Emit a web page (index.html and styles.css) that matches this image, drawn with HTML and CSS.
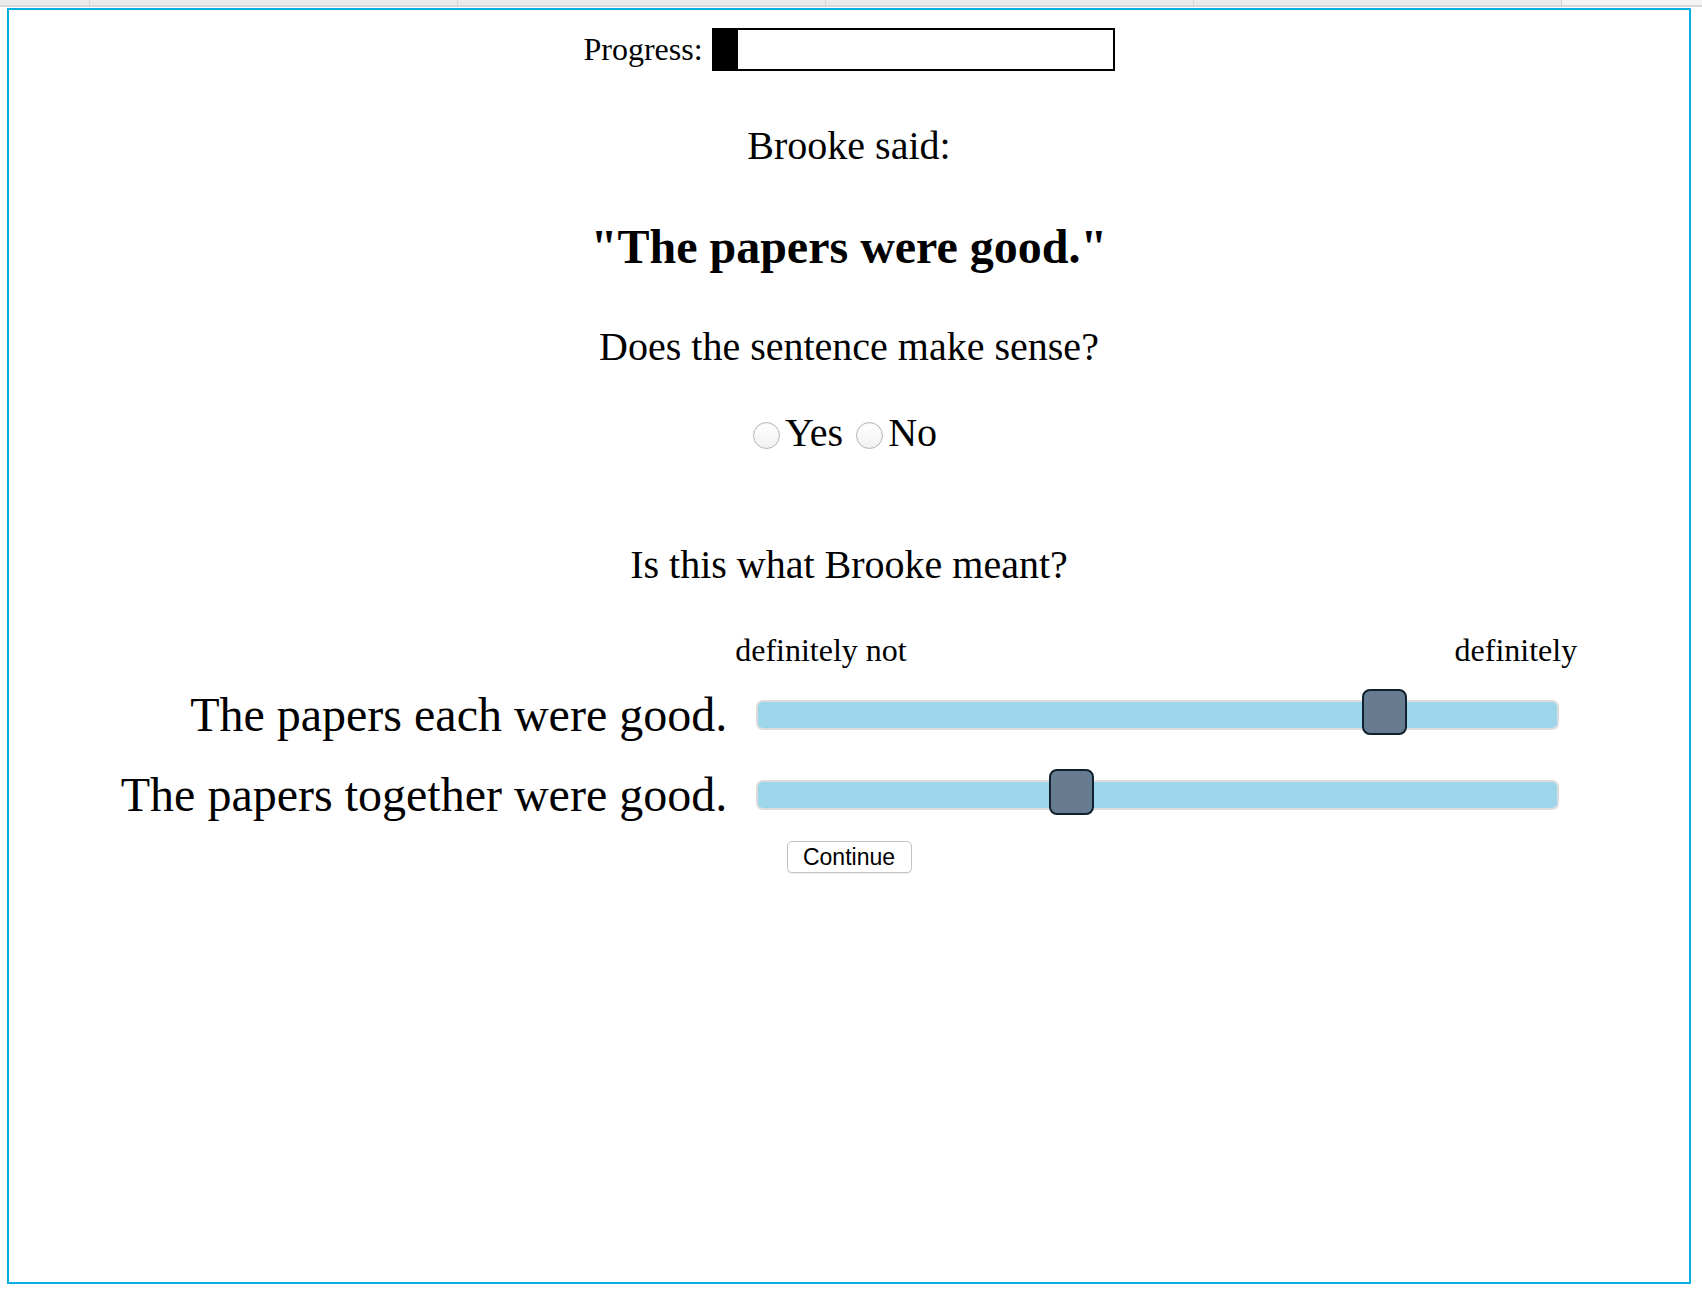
FILE: index.html
```html
<!DOCTYPE html>
<html>
<head>
<meta charset="utf-8">
<title>Experiment</title>
<link rel="stylesheet" href="styles.css">
</head>
<body>
<div class="tabbar">
  <div class="tab tab-first"></div>
  <div class="tab"></div>
  <div class="tab"></div>
  <div class="tab"></div>
  <div class="tab"></div>
  <div class="tab tab-rest"></div>
</div>
<div class="frame">
  <div class="progress-row">
    <span class="progress-label">Progress:</span>
    <div class="progress-box"><div class="progress-fill"></div></div>
  </div>
  <p class="speaker">Brooke said:</p>
  <h2 class="quote">"The papers were good."</h2>
  <p class="question q-sense">Does the sentence make sense?</p>
  <div class="choices">
    <label class="choice"><input type="radio" name="sense" class="radio">Yes</label>
    <label class="choice"><input type="radio" name="sense" class="radio">No</label>
  </div>
  <p class="question q-meant">Is this what Brooke meant?</p>
  <div class="rating">
    <div class="cell-empty"></div>
    <div class="scale-labels"><span>definitely not</span><span>definitely</span></div>
    <div class="sentence">The papers each were good.</div>
    <div class="slider-cell"><div class="slider"><span class="thumb" style="left:78.3%"></span></div></div>
    <div class="sentence">The papers together were good.</div>
    <div class="slider-cell"><div class="slider"><span class="thumb" style="left:39.2%"></span></div></div>
  </div>
  <div class="actions"><button class="continue">Continue</button></div>
</div>
</body>
</html>
```
FILE: styles.css
```css
html, body {
  margin: 0;
  padding: 0;
  background: #ffffff;
}
body {
  font-family: "Liberation Serif", "Times New Roman", serif;
  color: #000;
  width: 1702px;
  height: 1292px;
  overflow: hidden;
}
.tabbar {
  display: flex;
  height: 5px;
  background: #ebebeb;
  border-bottom: 2px solid #d9d9d9;
  margin-bottom: 1px;
}
.tab {
  width: 368px;
  border-left: 1px solid #d2d2d2;
  box-sizing: border-box;
}
.tab-first {
  width: 89px;
  border-left: none;
}
.tab-rest {
  flex: 1;
  background: #f4f4f4;
}
.frame {
  box-sizing: border-box;
  margin-left: 7px;
  width: 1684px;
  height: 1276px;
  border: 2px solid #0aade0;
  text-align: center;
}
.progress-row {
  margin-top: 18px;
  display: flex;
  justify-content: center;
  align-items: center;
  gap: 9px;
  height: 43px;
}
.progress-label {
  font-size: 32px;
  line-height: 43px;
}
.progress-box {
  box-sizing: border-box;
  width: 403px;
  height: 43px;
  border: 2px solid #000;
  display: flex;
}
.progress-fill {
  width: 24px;
  background: #000;
}
.speaker {
  margin: 52px 0 0;
  font-size: 40px;
  line-height: 46px;
}
.quote {
  margin: 50px 0 0;
  font-size: 48px;
  line-height: 55px;
  font-weight: bold;
}
.question {
  margin: 0;
  font-size: 40px;
  line-height: 46px;
}
.q-sense {
  margin-top: 50px;
}
.choices {
  margin-top: 40px;
  font-size: 40px;
  line-height: 46px;
  display: flex;
  justify-content: center;
  gap: 13px;
  padding-right: 8px;
}
.choice {
  display: inline-flex;
  align-items: baseline;
}
.radio {
  appearance: none;
  -webkit-appearance: none;
  width: 27px;
  height: 27px;
  margin: 0 5px 0 0;
  border: 1px solid #b4b4b4;
  border-radius: 50%;
  background: linear-gradient(#ffffff, #f1f1f1);
  box-shadow: inset 0 1px 1px rgba(0,0,0,0.06);
  position: relative;
  top: 3px;
  box-sizing: border-box;
}
.q-meant {
  margin-top: 86px;
}
.rating {
  margin-top: 44px;
  display: grid;
  grid-template-columns: auto 842px;
  column-gap: 8px;
  justify-content: center;
  align-items: center;
  row-gap: 0;
}
.scale-labels {
  display: flex;
  justify-content: space-between;
  font-size: 32px;
  line-height: 37px;
  margin-bottom: 18px;
}
.sentence {
  font-size: 48px;
  line-height: 55px;
  text-align: right;
  white-space: nowrap;
}
.sentence + .slider-cell + .sentence,
.sentence + .slider-cell + .sentence + .slider-cell {
  margin-top: 25px;
}
.slider {
  position: relative;
  box-sizing: border-box;
  margin: 0 18px 0 21px;
  height: 30px;
  background: #9dd6ea;
  border: 2px solid #dcdcdc;
  border-radius: 7px;
}
.thumb {
  position: absolute;
  top: -13px;
  width: 45px;
  height: 46px;
  margin-left: -22px;
  box-sizing: border-box;
  background: #677b91;
  border: 2px solid #10222f;
  border-radius: 8px;
}
.actions {
  margin-top: 19px;
  display: flex;
  justify-content: center;
}
.continue {
  box-sizing: border-box;
  width: 125px;
  height: 32px;
  font-family: "Liberation Sans", Arial, sans-serif;
  font-size: 23px;
  color: #000;
  background: #fff;
  border: 1px solid #c4c4c4;
  border-radius: 5px;
  box-shadow: 0 1px 1px rgba(0,0,0,0.08);
  padding: 0;
}
```
